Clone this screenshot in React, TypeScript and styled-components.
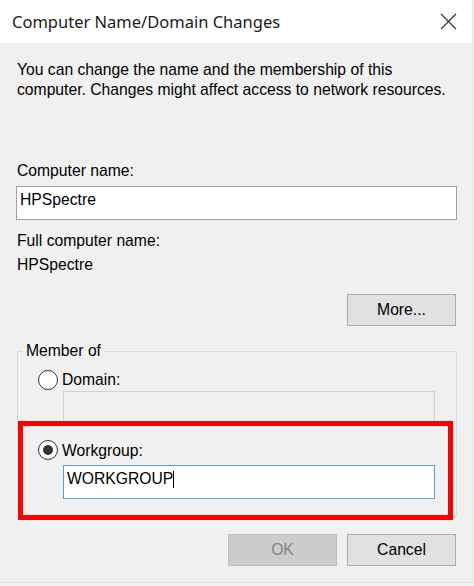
import React from "react";
import styled, { createGlobalStyle } from "styled-components";

const Global = createGlobalStyle`
  html, body { margin: 0; padding: 0; background: #f0f0f0; }
  body { font-family: "Liberation Sans", Arial, sans-serif; font-size: 15.7px; color: #000; }
  * { box-sizing: border-box; }
`;

const Dialog = styled.div`
  width: 473px;
  height: 583px;
  background: #f0f0f0;
  border-right: 1px solid #e2e2e2;
  border-bottom: 1px solid #e2e2e2;
  display: flex;
  flex-direction: column;
`;

const TitleBar = styled.div`
  height: 43px;
  background: #ffffff;
  display: flex;
  align-items: center;
  justify-content: space-between;
  padding: 0 15px 0 12px;
`;

const Title = styled.div`
  font-family: "Noto Sans", "Open Sans", sans-serif;
  font-size: 16.5px;
  color: #1a1a1a;
  line-height: 20px;
  margin-top: 1px;
`;

const Body = styled.div`
  padding: 17px 15px 0 16px;
  display: flex;
  flex-direction: column;
`;

const Text = styled.div<{ $mt?: number }>`
  line-height: 20px;
  padding-left: 1px;
  margin-top: ${(p) => p.$mt ?? 0}px;
`;

const TextBox = styled.div<{ $mt?: number; $state?: "normal" | "focus" | "disabled" }>`
  height: 34px;
  margin-top: ${(p) => p.$mt ?? 0}px;
  padding: 3px 3px 0;
  line-height: 20px;
  background: ${(p) => (p.$state === "disabled" ? "#f0f0f0" : "#ffffff")};
  border: 1px solid
    ${(p) =>
      p.$state === "focus" ? "#5f9dd8" : p.$state === "disabled" ? "#d3d3d3" : "#a0a0a0"};
  display: flex;
  align-items: flex-start;
`;

const Caret = styled.span`
  display: inline-block;
  width: 1px;
  height: 17px;
  background: #000;
  margin-top: 2px;
`;

const ButtonRow = styled.div<{ $mt: number }>`
  display: flex;
  justify-content: flex-end;
  gap: 10px;
  margin-top: ${(p) => p.$mt}px;
  padding-right: 1px;
`;

const Button = styled.div<{ $disabled?: boolean }>`
  width: 109px;
  height: 32px;
  display: flex;
  align-items: center;
  justify-content: center;
  background: ${(p) => (p.$disabled ? "#cccccc" : "#e1e1e1")};
  border: 1px solid ${(p) => (p.$disabled ? "#bfbfbf" : "#adadad")};
  color: ${(p) => (p.$disabled ? "#838383" : "#000")};
`;

const Group = styled.fieldset`
  margin: 15px 0 0 1px;
  padding: 9px 0 16px 0;
  border: 1px solid #dcdcdc;
  min-width: 0;
  width: 440px;
`;

const Legend = styled.legend`
  margin-left: 5px;
  padding: 0 3px;
  line-height: 20px;
`;

const GroupContent = styled.div`
  padding-left: 20px;
`;

const RadioRow = styled.div`
  display: flex;
  align-items: center;
  gap: 4px;
  height: 20px;
`;

const RadioCircle = styled.span<{ $checked?: boolean }>`
  width: 20px;
  height: 20px;
  border-radius: 50%;
  border: 1px solid #333;
  background: #fff;
  display: flex;
  align-items: center;
  justify-content: center;
  &::after {
    content: "";
    width: 10px;
    height: 10px;
    border-radius: 50%;
    background: ${(p) => (p.$checked ? "#333" : "transparent")};
  }
`;

const RadioLabel = styled.span<{ $dy?: number }>`
  line-height: 20px;
  position: relative;
  top: ${(p) => p.$dy ?? 0}px;
`;

const Indented = styled.div`
  margin-left: 25px;
  margin-right: 21px;
`;

const Highlight = styled.div`
  position: relative;
  margin-top: 15px;
  &::after {
    content: "";
    position: absolute;
    left: -20px;
    right: 3px;
    top: -19px;
    bottom: -21px;
    border: 5px solid #fa0000;
    pointer-events: none;
  }
`;

const CloseIcon = () => (
  <svg width="17" height="17" viewBox="0 0 17 17" aria-hidden="true">
    <path d="M1 1 L16 16 M16 1 L1 16" stroke="#333" strokeWidth="1.2" fill="none" />
  </svg>
);

export default function App() {
  return (
    <>
      <Global />
      <Dialog>
        <TitleBar>
          <Title>Computer Name/Domain Changes</Title>
          <CloseIcon />
        </TitleBar>
        <Body>
          <Text>
            You can change the name and the membership of this
            <br />
            computer. Changes might affect access to network resources.
          </Text>
          <Text $mt={61}>Computer name:</Text>
          <TextBox $mt={5}>HPSpectre</TextBox>
          <Text $mt={11}>Full computer name:</Text>
          <Text $mt={4}>HPSpectre</Text>
          <ButtonRow $mt={19}>
            <Button>More...</Button>
          </ButtonRow>
          <Group>
            <Legend>Member of</Legend>
            <GroupContent>
              <RadioRow>
                <RadioCircle />
                <RadioLabel>Domain:</RadioLabel>
              </RadioRow>
              <Indented>
                <TextBox $mt={1} $state="disabled" />
              </Indented>
              <Highlight>
                <RadioRow>
                  <RadioCircle $checked />
                  <RadioLabel $dy={1}>Workgroup:</RadioLabel>
                </RadioRow>
                <Indented>
                  <TextBox $mt={5} $state="focus">
                    WORKGROUP
                    <Caret />
                  </TextBox>
                </Indented>
              </Highlight>
            </GroupContent>
          </Group>
          <ButtonRow $mt={18}>
            <Button $disabled>OK</Button>
            <Button>Cancel</Button>
          </ButtonRow>
        </Body>
      </Dialog>
    </>
  );
}
